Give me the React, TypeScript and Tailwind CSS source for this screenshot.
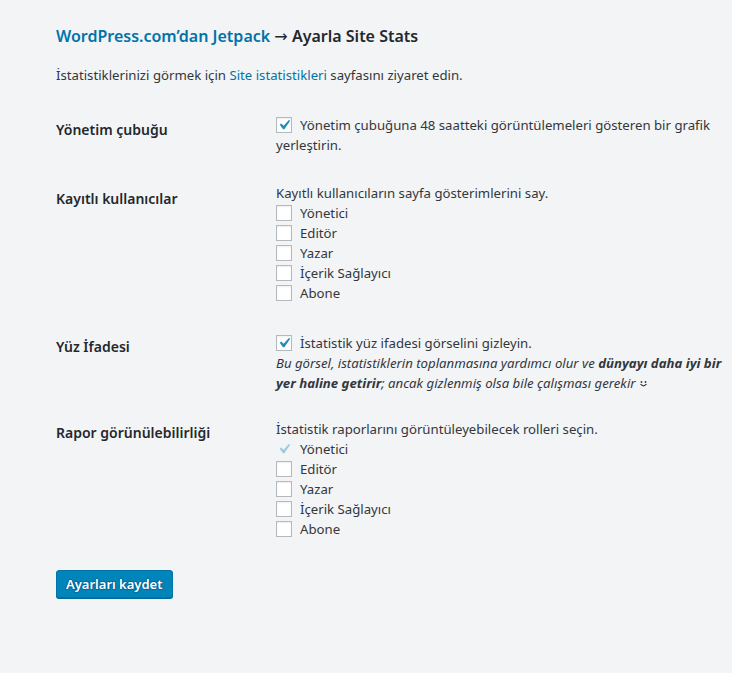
import React from "react";

const font = { fontFamily: '"Noto Sans", "Open Sans", sans-serif' };

function Box({ checked, disabled }: { checked?: boolean; disabled?: boolean }) {
  return (
    <span
      className={`inline-flex items-center justify-center w-4 h-4 shrink-0 mr-[8px] overflow-visible ${
        disabled ? "border border-transparent bg-transparent" : "border border-[#b4b9be] bg-white shadow-[inset_0_1px_2px_rgba(0,0,0,0.07)]"
      }`}
    >
      {checked && (
        <svg width="20" height="20" viewBox="0 0 20 20" className={`-m-[3px] shrink-0 ${disabled ? "opacity-40" : ""}`}>
          <path d="M14.83 4.89l1.34.94-5.81 8.38H9.02L5.78 9.67l1.34-1.25 2.57 2.4z" fill="#1e8cbe" />
        </svg>
      )}
    </span>
  );
}

function Check({ label, checked, disabled }: { label: string; checked?: boolean; disabled?: boolean }) {
  return (
    <div className="flex items-center h-5">
      <Box checked={checked} disabled={disabled} />
      <span>{label}</span>
    </div>
  );
}

function Row({ th, children }: { th: string; children: React.ReactNode }) {
  return (
    <div className="flex">
      <div className="w-[220px] shrink-0 pt-[20px] pb-[20px] pr-[10px] font-semibold text-[14px] leading-[18px] text-[#23282d]">
        {th}
      </div>
      <div className="flex-1 py-[15px] pr-[6px]">{children}</div>
    </div>
  );
}

const roles = ["Yönetici", "Editör", "Yazar", "İçerik Sağlayıcı", "Abone"];

export default function App() {
  return (
    <div style={font} className="min-h-[673px] bg-[#f3f4f6] text-[#32373c] text-[13.2px] leading-5 pl-[56px] pr-[2px] pt-[25px]">
      <h1 className="text-[16px] font-semibold leading-[22px] text-[#23282d]">
        <a className="text-[#0073aa]">WordPress.com’dan Jetpack</a> <span className="font-normal" style={{ fontFamily: '"DejaVu Sans", sans-serif' }}>→</span> Ayarla Site Stats
      </h1>
      <p className="mt-[17px]">
        İstatistiklerinizi görmek için <a className="text-[#0073aa]">Site istatistikleri</a> sayfasını ziyaret edin.
      </p>
      <div className="mt-[16px]">
        <Row th="Yönetim çubuğu">
          <div className="-mt-[1px]">
            <span className="inline-flex align-top mt-[2px]">
              <Box checked />
            </span>
            Yönetim çubuğuna 48 saatteki görüntülemeleri gösteren bir grafik yerleştirin.
          </div>
        </Row>
        <Row th="Kayıtlı kullanıcılar">
          <div className="-mt-[2px]">Kayıtlı kullanıcıların sayfa gösterimlerini say.</div>
          {roles.map((r) => (
            <Check key={r} label={r} />
          ))}
        </Row>
        <Row th="Yüz İfadesi">
          <Check label="İstatistik yüz ifadesi görselini gizleyin." checked />
          <div className="italic">
            Bu görsel, istatistiklerin toplanmasına yardımcı olur ve <b>dünyayı daha iyi bir yer haline getirir</b>; ancak gizlenmiş olsa bile çalışması gerekir{" "}
            <svg width="9" height="9" viewBox="0 0 9 9" className="inline-block align-baseline">
              <circle cx="2.5" cy="3" r="0.9" fill="#32373c" />
              <circle cx="6.5" cy="3" r="0.9" fill="#32373c" />
              <path d="M1.5 5.2 Q4.5 8.5 7.5 5.2" stroke="#32373c" strokeWidth="1.1" fill="none" />
            </svg>
          </div>
        </Row>
        <div className="-mt-[4px]">
          <Row th="Rapor görünülebilirliği">
            <div>İstatistik raporlarını görüntüleyebilecek rolleri seçin.</div>
            {roles.map((r, i) => (
              <Check key={r} label={r} checked={i === 0} disabled={i === 0} />
            ))}
          </Row>
        </div>
      </div>
      <div className="mt-[16px]">
        <button className="h-[28px] px-[9px] rounded-[3px] bg-[#0085ba] border border-[#0073aa] shadow-[0_1px_0_#006799] text-white font-semibold text-[13px] leading-[26px] [text-shadow:0_-1px_1px_#006799,1px_0_1px_#006799,0_1px_1px_#006799,-1px_0_1px_#006799]">
          Ayarları kaydet
        </button>
      </div>
    </div>
  );
}
